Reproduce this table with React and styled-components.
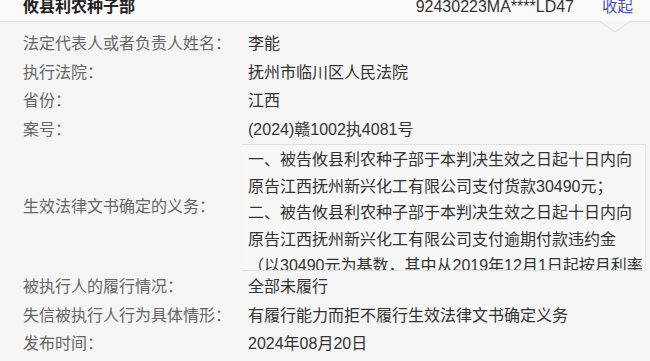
import React from "react";
import styled, { createGlobalStyle } from "styled-components";

const Global = createGlobalStyle`
  html, body { margin: 0; padding: 0; background: #f5f5f5; }
  body { font-family: "Liberation Sans", "Noto Sans CJK SC", sans-serif; }
`;

const Page = styled.div`
  width: 650px;
  height: 361px;
  overflow: hidden;
  background: #f5f5f5;
`;

const Header = styled.div`
  position: relative;
  height: 22px;
  box-sizing: border-box;
  border-bottom: 1px solid #e2e2e2;
  background: #fafafa;
  display: flex;
  align-items: flex-end;
  padding: 0 17px 6px 23px;
  line-height: 16px;
`;

const Title = styled.div`
  flex: 1;
  font-size: 16px;
  font-weight: bold;
  color: #222;
`;

const Code = styled.div`
  font-size: 16px;
  color: #333;
  margin-right: 28px;
`;

const Toggle = styled.div`
  font-size: 15.5px;
  color: #4a50ae;
  cursor: pointer;
`;

const Caret = styled.svg`
  position: absolute;
  right: 19px;
  top: 21px;
`;

const Body = styled.div`
  display: grid;
  grid-template-columns: 219px 1fr;
  padding: 8px 4px 0 23px;
  font-size: 16px;
`;

const Label = styled.div`
  color: #666;
  line-height: 28.5px;
  display: flex;
  align-items: center;
  margin-top: ${(p) => p.$mt || 0}px;
`;

const Value = styled.div`
  color: #333;
  line-height: 28.5px;
  padding-left: 6px;
  margin-top: ${(p) => p.$mt || 0}px;
`;

const Box = styled.div`
  height: 127px;
  overflow: hidden;
  box-sizing: border-box;
  border-top: 1px solid #e0e0e0;
  border-bottom: 1px solid #e0e0e0;
  border-right: 1px solid #e4e4e4;
  background: #f7f7f7;
  padding: 2px 0 0 6px;
  color: #333;
  line-height: 26.5px;
  white-space: pre;
`;

const rows = [
  ["法定代表人或者负责人姓名：", "李能"],
  ["执行法院：", "抚州市临川区人民法院"],
  ["省份：", "江西"],
  ["案号：", "(2024)赣1002执4081号"],
];

const rows2 = [
  ["被执行人的履行情况：", "全部未履行"],
  ["失信被执行人行为具体情形：", "有履行能力而拒不履行生效法律文书确定义务"],
  ["发布时间：", "2024年08月20日"],
];

const duty =
  "一、被告攸县利农种子部于本判决生效之日起十日内向\n原告江西抚州新兴化工有限公司支付货款30490元；\n二、被告攸县利农种子部于本判决生效之日起十日内向\n原告江西抚州新兴化工有限公司支付逾期付款违约金\n（以30490元为基数，其中从2019年12月1日起按月利率";

export default function App() {
  return (
    <Page>
      <Global />
      <Header>
        <Title>攸县利农种子部</Title>
        <Code>92430223MA****LD47</Code>
        <Toggle>收起</Toggle>
        <Caret width="32" height="12" viewBox="0 0 32 12">
          <path d="M0 0 L16 11 L32 0" fill="#f5f5f5" stroke="#dcdcdc" strokeWidth="1" />
        </Caret>
      </Header>
      <Body>
        {rows.map(([l, v]) => (
          <React.Fragment key={l}>
            <Label>{l}</Label>
            <Value>{v}</Value>
          </React.Fragment>
        ))}
        <Label>生效法律文书确定的义务：</Label>
        <Box>{duty}</Box>
        {rows2.map(([l, v], i) => (
          <React.Fragment key={l}>
            <Label $mt={i === 0 ? 2 : 0}>{l}</Label>
            <Value $mt={i === 0 ? 2 : 0}>{v}</Value>
          </React.Fragment>
        ))}
      </Body>
    </Page>
  );
}
